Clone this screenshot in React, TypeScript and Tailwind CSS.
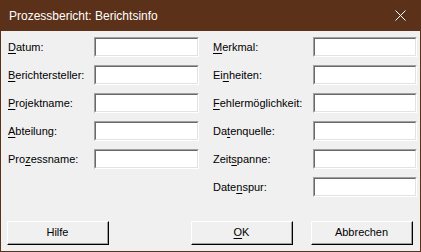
const left: [string, number][] = [
  ['Datum:', 0],
  ['Berichtersteller:', 0],
  ['Projektname:', 0],
  ['Abteilung:', 0],
  ['Prozessname:', 3],
];

const right: [string, number][] = [
  ['Merkmal:', 0],
  ['Einheiten:', 2],
  ['Fehlermöglichkeit:', 0],
  ['Datenquelle:', 2],
  ['Zeitspanne:', 4],
  ['Datenspur:', 4],
];

function Label({ text, u }: { text: string; u: number }) {
  return (
    <span className="whitespace-pre">
      {text.slice(0, u)}
      <span className="underline underline-offset-2">{text[u]}</span>
      {text.slice(u + 1)}
    </span>
  );
}

function Field() {
  return (
    <div className="h-[20px] border-t border-l border-t-[#a0a0a0] border-l-[#a0a0a0] border-b border-r border-b-white border-r-white">
      <div className="h-full border-t border-l border-t-[#696969] border-l-[#696969] border-b border-r border-b-[#e3e3e3] border-r-[#e3e3e3] bg-white" />
    </div>
  );
}

function Row({ text, u, labelW, fieldW }: { text: string; u: number; labelW: string; fieldW: string }) {
  return (
    <div className="flex items-center h-[20px]">
      <div className={labelW}>
        <Label text={text} u={u} />
      </div>
      <div className={fieldW}>
        <Field />
      </div>
    </div>
  );
}

function Btn({ children }: { children: React.ReactNode }) {
  return (
    <div className="w-[102px] h-[24px] border-t border-l border-t-white border-l-white border-b border-r border-b-black border-r-black">
      <div className="h-full flex items-center justify-center border-b border-r border-b-[#a0a0a0] border-r-[#a0a0a0] bg-[#f0f0f0]">
        {children}
      </div>
    </div>
  );
}

export default function App() {
  return (
    <div
      className="w-[421px] h-[252px] flex flex-col bg-[#5b3219] text-[11px] text-black"
      style={{ fontFamily: 'Tahoma, "DejaVu Sans", sans-serif' }}
    >
      <div className="h-[31px] shrink-0 flex items-center justify-between pl-[9px] pr-[10px] text-white text-[12px] font-['Liberation_Sans',sans-serif]">
        <span>Prozessbericht: Berichtsinfo</span>
        <svg width="11" height="11" viewBox="0 0 11 11" className="mr-[5px]">
          <path d="M0.5 0.5 L10.5 10.5 M10.5 0.5 L0.5 10.5" stroke="white" strokeWidth="1" />
        </svg>
      </div>
      <div className="flex-1 mx-px mb-px bg-[#f0f0f0] flex flex-col">
        <div className="flex pt-[6px] pl-[7px] font-['Liberation_Sans',sans-serif]">
          <div className="flex flex-col gap-[8px]">
            {left.map(([t, u]) => (
              <Row key={t} text={t} u={u} labelW="w-[86px]" fieldW="w-[105px]" />
            ))}
          </div>
          <div className="flex flex-col gap-[8px] ml-[14px]">
            {right.map(([t, u]) => (
              <Row key={t} text={t} u={u} labelW="w-[100px]" fieldW="w-[104px]" />
            ))}
          </div>
        </div>
        <div className="mt-auto mb-[6px] flex pl-[6px] pr-[7px] font-['Liberation_Sans',sans-serif]">
          <Btn>Hilfe</Btn>
          <div className="ml-auto flex gap-[18px]">
            <Btn>
              <Label text="OK" u={0} />
            </Btn>
            <Btn>Abbrechen</Btn>
          </div>
        </div>
      </div>
    </div>
  );
}
